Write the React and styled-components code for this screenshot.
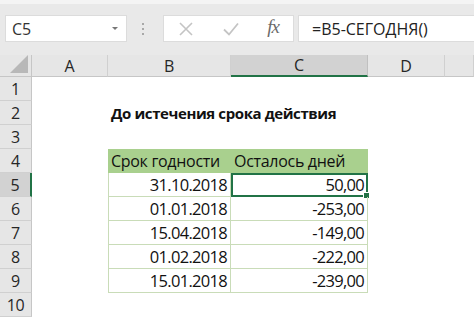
import styled, { createGlobalStyle } from "styled-components";

const GlobalStyle = createGlobalStyle`
  html, body {
    margin: 0;
    padding: 0;
    background: #ffffff;
  }
  body {
    font-family: "Open Sans", "Noto Sans", sans-serif;
    color: #1a1a1a;
  }
`;

const columns = ["A", "B", "C", "D", ""];

const rows = [
  { date: "31.10.2018", days: "50,00" },
  { date: "01.01.2018", days: "-253,00" },
  { date: "15.04.2018", days: "-149,00" },
  { date: "01.02.2018", days: "-222,00" },
  { date: "15.01.2018", days: "-239,00" },
];

const App = () => {
  return (
    <>
      <GlobalStyle />
      <Window>
        <FormulaBar>
          <NameBox>
            <span>C5</span>
            <DropArrow />
          </NameBox>
          <Grip>
            <i />
            <i />
            <i />
          </Grip>
          <ButtonsBox>
            <svg width="16" height="16" viewBox="0 0 16 16">
              <path d="M2 2 L14 14 M14 2 L2 14" stroke="#c4c4c4" strokeWidth="1.6" fill="none" />
            </svg>
            <svg width="18" height="16" viewBox="0 0 18 16">
              <path d="M2 8.5 L7 13.5 L16 2.5" stroke="#c4c4c4" strokeWidth="1.8" fill="none" />
            </svg>
            <Fx>fx</Fx>
          </ButtonsBox>
          <FormulaBox>=B5-СЕГОДНЯ()</FormulaBox>
        </FormulaBar>

        <Sheet>
          <Corner>
            <svg width="18" height="18" viewBox="0 0 18 18">
              <path d="M18 0 L18 18 L0 18 Z" fill="#b8b8b8" />
            </svg>
          </Corner>
          {columns.map((c, i) => (
            <ColHeader key={i} $active={c === "C"}>{c}</ColHeader>
          ))}

          <RowHeader>1</RowHeader>
          <Blank />
          <Blank />
          <Blank />
          <Blank />
          <Blank />

          <RowHeader>2</RowHeader>
          <Blank />
          <Title>До истечения срока действия</Title>
          <Blank />
          <Blank />

          <RowHeader>3</RowHeader>
          <Blank />
          <Blank />
          <Blank />
          <Blank />
          <Blank />

          <RowHeader>4</RowHeader>
          <Blank />
          <HeadCell>Срок годности</HeadCell>
          <HeadCell>Осталось дней</HeadCell>
          <Blank />
          <Blank />

          {rows.map((r, i) => (
            <Row key={i}>
              <RowHeader $active={i === 0}>{i + 5}</RowHeader>
              <Blank />
              <DataCell $first>{r.date}</DataCell>
              <DataCell $selected={i === 0}>{r.days}</DataCell>
              <Blank />
              <Blank />
            </Row>
          ))}

          <RowHeader>10</RowHeader>
          <Blank />
          <Blank />
          <Blank />
          <Blank />
          <Blank />
        </Sheet>
      </Window>
    </>
  );
};

const Row = styled.div`
  display: contents;
`;

const Window = styled.div`
  width: 474px;
  height: 318px;
  overflow: hidden;
  display: flex;
  flex-direction: column;
  background: #ffffff;
`;

const FormulaBar = styled.div`
  height: 55px;
  box-sizing: border-box;
  padding: 15px 0 0 5px;
  display: flex;
  align-items: flex-start;
  background: linear-gradient(#f4f4f4 0 4px, #e9e9e9 4px);
`;

const Box = styled.div`
  height: 27px;
  box-sizing: border-box;
  background: #ffffff;
  border: 1px solid #dcdcdc;
  display: flex;
  align-items: center;
`;

const NameBox = styled(Box)`
  width: 122px;
  padding: 0 8px 0 6px;
  justify-content: space-between;
  font-size: 16px;
  color: #333;
`;

const DropArrow = styled.span`
  width: 0;
  height: 0;
  border-left: 3px solid transparent;
  border-right: 3px solid transparent;
  border-top: 3px solid #777;
`;

const Grip = styled.div`
  width: 32px;
  height: 27px;
  margin-right: 4px;
  display: flex;
  flex-direction: column;
  align-items: center;
  justify-content: center;
  gap: 3px;

  i {
    width: 2px;
    height: 2px;
    background: #a8a8a8;
  }
`;

const ButtonsBox = styled(Box)`
  width: 131px;
  padding: 0 14px 0 14px;
  justify-content: space-between;
`;

const Fx = styled.span`
  font-family: "Liberation Serif", "DejaVu Serif", serif;
  font-style: italic;
  font-size: 19px;
  color: #6b6b6b;
  letter-spacing: -1px;
  margin-top: -3px;
`;

const FormulaBox = styled(Box)`
  flex: 1;
  margin-left: 4px;
  border-right: none;
  padding-left: 13px;
  font-size: 16px;
  color: #222;
`;

const Sheet = styled.div`
  display: grid;
  grid-template-columns: 32px 76px 123px 137px 77px 1fr;
  grid-template-rows: 22px repeat(10, 24px);
  font-size: 16.5px;
  letter-spacing: -0.3px;
`;

const Corner = styled.div`
  background: #e6e6e6;
  border-right: 1px solid #c6c6c6;
  border-bottom: 1px solid #c6c6c6;
  display: flex;
  align-items: flex-end;
  justify-content: flex-end;
  padding: 0 3px 3px 0;
`;

const ColHeader = styled.div`
  background: ${(p) => (p.$active ? "#d2d2d2" : "#e6e6e6")};
  border-right: 1px solid ${(p) => (p.$active ? "#c0c0c0" : "#d0d0d0")};
  border-bottom: ${(p) => (p.$active ? "2px solid #217346" : "1px solid #c6c6c6")};
  display: flex;
  align-items: center;
  justify-content: center;
  font-size: 16px;
  color: #262626;
`;

const RowHeader = styled.div`
  background: ${(p) => (p.$active ? "#d2d2d2" : "#e6e6e6")};
  border-right: ${(p) => (p.$active ? "2px solid #217346" : "1px solid #c6c6c6")};
  border-bottom: 1px solid #d0d0d0;
  display: flex;
  align-items: center;
  justify-content: center;
  font-size: 16px;
  color: #262626;
`;

const Blank = styled.div`
  background: #ffffff;
`;

const Title = styled.div`
  grid-column: span 2;
  display: flex;
  align-items: center;
  padding-left: 3px;
  font-weight: 700;
  font-size: 15px;
  letter-spacing: -0.4px;
  white-space: nowrap;
  color: #111;
`;

const HeadCell = styled.div`
  background: #a9d08e;
  display: flex;
  align-items: center;
  padding-left: 3px;
  font-size: 16px;
  color: #111;
  white-space: nowrap;
`;

const DataCell = styled.div`
  position: relative;
  display: flex;
  align-items: center;
  justify-content: flex-end;
  padding-right: 3px;
  letter-spacing: -0.7px;
  color: #111;
  border-bottom: 1px solid #c9dcb8;
  border-right: 1px solid #c9dcb8;
  border-left: ${(p) => (p.$first ? "1px solid #c9dcb8" : "none")};
  box-sizing: border-box;

  ${(p) =>
    p.$selected &&
    `
    outline: 2px solid #217346;
    outline-offset: -2px;
    &::after {
      content: "";
      position: absolute;
      right: -3px;
      bottom: -3px;
      width: 5px;
      height: 5px;
      background: #217346;
      border: 1px solid #ffffff;
    }
  `}
`;

export default App;
